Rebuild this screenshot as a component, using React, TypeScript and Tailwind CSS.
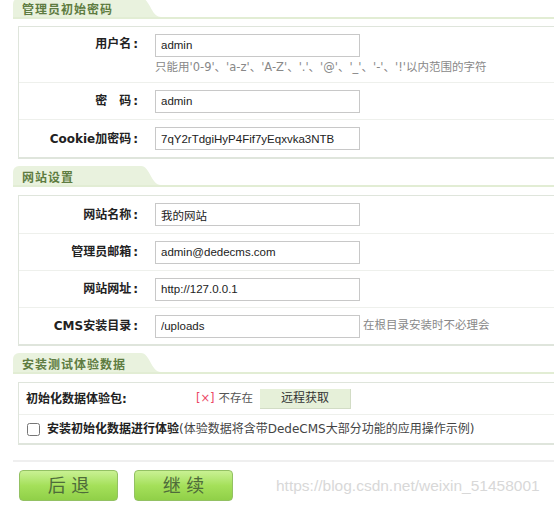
import React from "react";

const base = "font-['DejaVu_Sans','Noto_Sans_CJK_SC',sans-serif]";
const sans = "font-['Liberation_Sans','Noto_Sans_CJK_SC',sans-serif]";

function SectionHeader({ title, className = "" }: { title: string; className?: string }) {
  return (
    <div className={`mr-[-20px] flex h-[21px] border-b-2 border-[#e2edd4] ${className}`}>
      <div className="w-[128px] rounded-tl-[6px] bg-[#e9f2de] pl-[9px] pt-[5px] text-[12px] font-bold leading-[14px] tracking-[1px] text-[#5e7c41]">
        {title}
      </div>
      <svg width="20" height="19" viewBox="0 0 20 19" className="block">
        <path d="M0 0 C9 0 10 19 20 19 L0 19 Z" fill="#e9f2de" />
      </svg>
    </div>
  );
}

function Label({ text }: { text: string }) {
  return (
    <div className="w-[136px] shrink-0 pr-[17px] text-right text-[12px] font-bold text-[#222]">
      {text}
      <span className="ml-[2px]">:</span>
    </div>
  );
}

function TextBox({ value }: { value: string }) {
  return (
    <input
      type="text"
      defaultValue={value}
      className={`h-[23px] w-[205px] border border-[#c8c8c8] bg-white pl-[5px] text-[11.5px] text-[#222] outline-none ${sans}`}
    />
  );
}

function Field({
  label,
  value,
  note,
  h = "h-[37px]",
  first = false,
}: {
  label: string;
  value: string;
  note?: string;
  h?: string;
  first?: boolean;
}) {
  return (
    <div className={`flex items-center ${h} ${first ? "" : "border-t border-[#eef0ec]"}`}>
      <Label text={label} />
      <TextBox value={value} />
      {note && <span className="ml-[3px] text-[11.5px] text-[#888]">{note}</span>}
    </div>
  );
}

function Panel({ children, className = "" }: { children: React.ReactNode; className?: string }) {
  return (
    <div className={`ml-[5px] mr-[-20px] border border-b-2 border-[#dfe5dc] bg-white ${className}`}>
      {children}
    </div>
  );
}

export default function App() {
  return (
    <div className={`relative h-[506px] w-[554px] overflow-hidden bg-white pl-[13px] ${base}`}>
      <SectionHeader title="管理员初始密码" className="mt-[-2px]" />
      <Panel className="mt-[7px]">
        <div className="flex h-[55px] items-start">
          <div className="mt-[5px] flex h-[23px] items-center">
            <Label text="用户名" />
          </div>
          <div className="pt-[5px]">
            <TextBox value="admin" />
            <div className="mt-[2px] text-[11.5px] leading-[16px] text-[#888]">
              只能用'0-9'、'a-z'、'A-Z'、'.'、'@'、'_'、'-'、'!'以内范围的字符
            </div>
          </div>
        </div>
        <Field label="密　码" value="admin" />
        <Field label="Cookie加密码" value="7qY2rTdgiHyP4Fif7yEqxvka3NTB" h="h-[38px]" />
      </Panel>

      <SectionHeader title="网站设置" className="mt-[7px]" />
      <Panel className="mt-[8px]">
        <Field label="网站名称" value="我的网站" first />
        <Field label="管理员邮箱" value="admin@dedecms.com" />
        <Field label="网站网址" value="http://127.0.0.1" />
        <Field label="CMS安装目录" value="/uploads" note="在根目录安装时不必理会" />
      </Panel>

      <SectionHeader title="安装测试体验数据" className="mt-[7px]" />
      <Panel className="mt-[8px]">
        <div className="flex h-[31px] items-center">
          <div className="w-[177px] shrink-0 pl-[7px] text-[12px] font-bold text-[#222]">初始化数据体验包:</div>
          <span className="text-[11.5px] text-[#ec4866]">[×]</span>
          <span className="ml-[4px] text-[11.5px] text-[#555]">不存在</span>
          <button className="ml-[7px] h-[20px] w-[91px] border-b border-r border-[#d2dcc5] bg-[#e6f0d9] text-[12px] text-[#333]">
            远程获取
          </button>
        </div>
        <div className="flex h-[29px] items-center border-t border-[#eef0ec] pl-[8px]">
          <input type="checkbox" className="m-0 h-[13px] w-[13px]" />
          <span className="ml-[7px] text-[12px] text-[#444]">
            <b className="text-[#222]">安装初始化数据进行体验</b>(体验数据将含带DedeCMS大部分功能的应用操作示例)
          </span>
        </div>
      </Panel>

      <div className="mr-[-20px] mt-[15px] h-[2px] bg-[#efefef]" />

      <div className="ml-[6px] mt-[8px] flex items-center">
        <button className="h-[31px] w-[99px] rounded-[4px] border border-[#93c163] bg-linear-to-b from-[#c9f193] via-[#a5e05a] to-[#90d048] text-[18px] text-[#4e6b3a]">
          后 退
        </button>
        <button className="ml-[16px] h-[31px] w-[99px] rounded-[4px] border border-[#93c163] bg-linear-to-b from-[#c9f193] via-[#a5e05a] to-[#90d048] text-[18px] text-[#4e6b3a]">
          继 续
        </button>
        <span className={`ml-[43px] text-[15.5px] text-[#d8d8d8] ${sans}`}>https://blog.csdn.net/weixin_51458001</span>
      </div>
    </div>
  );
}
